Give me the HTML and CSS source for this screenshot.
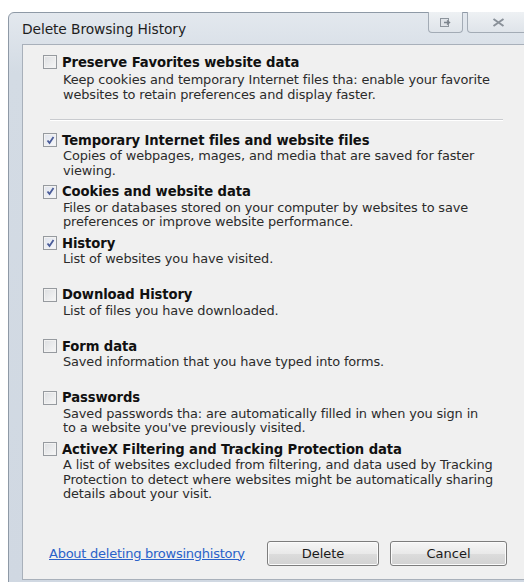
FILE: index.html
```html
<!DOCTYPE html>
<html>
<head>
<meta charset="utf-8">
<title>Delete Browsing History</title>
<link rel="stylesheet" href="styles.css">
</head>
<body>
<div class="window">
  <div class="titlebar">
    <span class="title">Delete Browsing History</span>
    <div class="caption-buttons">
      <div class="cap-btn cap-help">
        <svg width="12" height="9" viewBox="0 0 12 9"><rect x="0.5" y="0.5" width="8" height="8" fill="#dfe3e8" stroke="#8d949c"/><path d="M4 4.5h5M7 2.5l2.5 2-2.5 2" fill="none" stroke="#7b838c" stroke-width="1.4"/></svg>
      </div>
      <div class="cap-btn cap-close">
        <svg width="13" height="9" viewBox="0 0 13 9"><path d="M1.5 1l10 7M11.5 1l-10 7" stroke="#8a9199" stroke-width="2"/></svg>
      </div>
    </div>
  </div>
  <div class="panel">
    <div class="item first">
      <label class="head"><span class="box"></span>Preserve Favorites website data</label>
      <p class="desc">Keep cookies and temporary Internet files tha: enable your favorite<br>websites to retain preferences and display faster.</p>
    </div>
    <div class="separator"></div>
    <div class="item">
      <label class="head"><span class="box checked"><svg width="11" height="11" viewBox="0 0 11 11"><path d="M2.5 5.5l2 2.5 4-6" fill="none" stroke="#4a5c98" stroke-width="1.8"/></svg></span>Temporary Internet files and website files</label>
      <p class="desc">Copies of webpages, mages, and media that are saved for faster<br>viewing.</p>
    </div>
    <div class="item">
      <label class="head"><span class="box checked"><svg width="11" height="11" viewBox="0 0 11 11"><path d="M2.5 5.5l2 2.5 4-6" fill="none" stroke="#4a5c98" stroke-width="1.8"/></svg></span>Cookies and website data</label>
      <p class="desc">Files or databases stored on your computer by websites to save<br>preferences or improve website performance.</p>
    </div>
    <div class="item">
      <label class="head"><span class="box checked"><svg width="11" height="11" viewBox="0 0 11 11"><path d="M2.5 5.5l2 2.5 4-6" fill="none" stroke="#4a5c98" stroke-width="1.8"/></svg></span>History</label>
      <p class="desc">List of websites you have visited.</p>
    </div>
    <div class="item">
      <label class="head"><span class="box"></span>Download History</label>
      <p class="desc">List of files you have downloaded.</p>
    </div>
    <div class="item">
      <label class="head"><span class="box"></span>Form data</label>
      <p class="desc">Saved information that you have typed into forms.</p>
    </div>
    <div class="item">
      <label class="head"><span class="box"></span>Passwords</label>
      <p class="desc">Saved passwords tha: are automatically filled in when you sign in<br>to a website you've previously visited.</p>
    </div>
    <div class="item last">
      <label class="head"><span class="box"></span>ActiveX Filtering and Tracking Protection data</label>
      <p class="desc">A list of websites excluded from filtering, and data used by Tracking<br>Protection to detect where websites might be automatically sharing<br>details about your visit.</p>
    </div>
    <div class="actions">
      <a class="help-link" href="#">About deleting browsinghistory</a>
      <button class="btn btn-delete">Delete</button>
      <button class="btn btn-cancel">Cancel</button>
    </div>
  </div>
</div>
</body>
</html>
```

FILE: styles.css
```css
html, body {
  margin: 0;
  padding: 0;
  background: #ffffff;
  overflow: hidden;
  width: 524px;
  height: 582px;
}

.window {
  margin: 12px 0 0 8px;
  width: 530px;
  border: 1px solid #8e99a6;
  border-radius: 6px 0 0 0;
  background: linear-gradient(#e3e8ee, #d3dbe4 60px, #d0d8e2);
  padding-bottom: 4px;
  font-family: "DejaVu Sans", Verdana, sans-serif;
}

.titlebar {
  display: flex;
  align-items: center;
  height: 31px;
  padding: 0 10px 0 13px;
}

.title {
  flex: 1;
  font-size: 13.8px;
  color: #1e1e1e;
  padding-top: 1px;
  letter-spacing: -0.1px;
}

.caption-buttons {
  display: flex;
  gap: 4px;
  align-self: flex-start;
  margin-top: -1px;
}

.cap-btn {
  height: 20px;
  display: flex;
  align-items: center;
  justify-content: center;
  border: 1px solid #a3abb5;
  border-top: none;
  border-radius: 0 0 4px 4px;
  background: linear-gradient(#eef1f4, #dfe4ea);
}

.cap-help { width: 33px; }
.cap-close { width: 60px; }

.panel {
  margin-left: 13px;
  border: 1px solid #a8b0ba;
  border-right: none;
  background: #f0f0f0;
  padding: 9px 0 13px 20px;
}

.item {
  height: 51.5px;
}

.item.first,
.item.last {
  height: auto;
}

.head {
  display: flex;
  align-items: center;
  height: 16px;
  font-size: 13.2px;
  font-weight: bold;
  color: #111111;
  letter-spacing: -0.1px;
}

.box {
  width: 12px;
  height: 12px;
  margin-right: 5px;
  border: 1px solid #969a9f;
  background: linear-gradient(135deg, #dcdee1, #f7f7f7);
  box-shadow: inset 0 0 0 1px #f2f2f2;
  display: flex;
  align-items: center;
  justify-content: center;
  flex: none;
}

.box.checked {
  background: linear-gradient(135deg, #dfe3ec, #f7f8fb);
}

.box svg { display: block; }

.desc {
  margin: 1px 0 0 20px;
  font-size: 12.9px;
  line-height: 14.5px;
  color: #2b2b2b;
  letter-spacing: -0.12px;
}

.item.first .desc {
  margin-top: 3px;
}

.separator {
  height: 1px;
  background: #c9cbcf;
  margin: 17px 0 12px 7px;
  width: 453px;
  box-shadow: 0 1px 0 #ffffff;
}

.actions {
  display: flex;
  align-items: center;
  margin-top: 39px;
}

.help-link {
  font-size: 13px;
  color: #2a62c9;
  text-decoration: underline;
  margin-left: 6px;
  width: 218px;
  letter-spacing: -0.25px;
  white-space: nowrap;
}

.btn {
  height: 25px;
  font-family: "DejaVu Sans", Verdana, sans-serif;
  font-size: 13px;
  color: #1a1a1a;
  border: 1px solid #7d7d7d;
  border-radius: 3px;
  background: linear-gradient(#f6f6f6, #e9e9e9 50%, #dcdcdc 51%, #d2d2d2);
  box-shadow: inset 0 0 0 1px #fbfbfb;
  padding: 0;
}

.btn-delete { width: 112px; }
.btn-cancel { width: 117px; margin-left: 11px; }
```
